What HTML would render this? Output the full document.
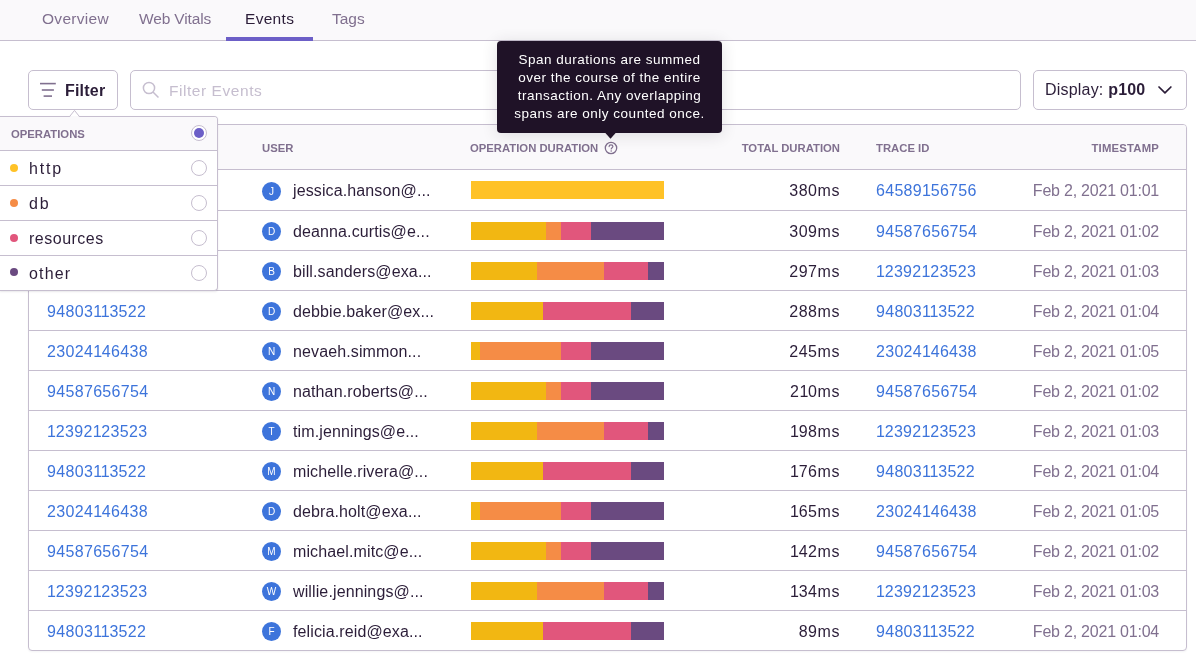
<!DOCTYPE html>
<html><head><meta charset="utf-8">
<style>
*{box-sizing:border-box;margin:0;padding:0}
html,body{will-change:transform;width:1196px;height:659px;overflow:hidden;background:#fff;font-family:"Liberation Sans",sans-serif;color:#2B1D38}
#tabs{position:absolute;left:0;top:0;width:1196px;height:41px;background:#FAF9FB;border-bottom:1px solid #C6BECF}
.tab{position:absolute;top:10px;font-size:15.5px;line-height:18px;color:#80708F;white-space:nowrap;letter-spacing:0.3px}
.tab.active{color:#2B1D38}
#uline{position:absolute;left:226px;top:37px;width:87px;height:4px;background:#6C5FC7}
.box{position:absolute;border:1px solid #C6BECF;border-radius:5px;background:#fff}
#panel{position:absolute;left:28px;top:124px;width:1159px;height:527px;border:1px solid #C6BECF;border-radius:4px;background:#fff;overflow:hidden;box-shadow:0 1px 2px rgba(43,34,51,.05)}
#thead{position:absolute;left:0;top:0;width:100%;height:45px;background:#FAF9FB;border-bottom:1px solid #C6BECF}
.th{position:absolute;top:16px;font-size:11.3px;line-height:14px;font-weight:bold;color:#80708F;white-space:nowrap}
.row{position:absolute;left:0;width:100%;border-bottom:1px solid #C6BECF}
.cell{position:absolute;top:11.5px;font-size:16px;line-height:18px;white-space:nowrap}
.link{color:#3D74DB}
.eid{left:18px;letter-spacing:0.33px}
.user{left:264px;letter-spacing:0.12px}
.dur{left:0;width:811px;text-align:right;letter-spacing:0.55px}
.dur i{font-style:normal;letter-spacing:-0.2px}
.eid i,.trace i{font-style:normal;letter-spacing:-0.2px}
.trace{left:847px;letter-spacing:0.3px}
.ts{left:0;width:1130px;text-align:right;color:#80708F;letter-spacing:-0.22px}
.r1 .cell{top:12px}.r1 .av{top:12px}
.av{position:absolute;top:11px;left:233px;width:19px;height:19px;border-radius:50%;background:#3D74DB;color:#fff;font-size:10px;text-align:center;line-height:19px}
.bar{position:absolute;left:442px;top:11px;width:193px;height:18px}
.bar span{position:absolute;top:0;height:100%}
.y{background:#F2B712}.y2{background:#FFC227}.o{background:#F58C46}.r{background:#E1567C}.p{background:#6A4A80}
.ddi{position:absolute;left:0;width:100%;height:35px;border-bottom:1px solid #C6BECF}
.ddi s{position:absolute;left:10px;top:13px;width:8px;height:8px;border-radius:50%}
.ddi span{position:absolute;left:29px;top:8.5px;font-size:16px;line-height:18px;color:#2B1D38;letter-spacing:0.4px}
.rad{position:absolute;left:191px;top:9px;width:16px;height:16px;border-radius:50%;border:1px solid #C6BECF;background:#fff}
.rad i{position:absolute;left:2px;top:2px;width:10px;height:10px;border-radius:50%;background:#6C5FC7}
</style></head><body>
<div id="tabs">
  <div class="tab" style="left:42px">Overview</div>
  <div class="tab" style="left:139px;letter-spacing:-0.15px">Web Vitals</div>
  <div class="tab active" style="left:245px">Events</div>
  <div class="tab" style="left:332px;letter-spacing:0">Tags</div>
  <div id="uline"></div>
</div>

<div class="box" style="left:28px;top:70px;width:90px;height:40px"></div>
<svg style="position:absolute;left:38px;top:80px" width="20" height="20" viewBox="0 0 20 20"><g stroke="#80708F" stroke-width="1.6" fill="none"><line x1="2" y1="3.6" x2="17.8" y2="3.6"/><line x1="3.8" y1="10" x2="15.9" y2="10"/><line x1="5.6" y1="16.1" x2="14" y2="16.1"/></g></svg>
<div style="position:absolute;left:65px;top:81.5px;font-size:16px;line-height:18px;font-weight:bold;color:#2B1D38;letter-spacing:0.2px">Filter</div>
<div class="box" style="left:130px;top:70px;width:891px;height:40px"></div>
<svg style="position:absolute;left:140px;top:79px" width="22" height="22" viewBox="0 0 22 22"><g stroke="#C6BECF" stroke-width="1.5" fill="none"><circle cx="9" cy="9" r="5.6"/><line x1="13" y1="13" x2="18.5" y2="18.5"/></g></svg>
<div style="position:absolute;left:169px;top:82px;font-size:15.5px;line-height:18px;color:#C6BECF;letter-spacing:0.55px">Filter Events</div>
<div class="box" style="left:1033px;top:70px;width:154px;height:40px"></div>
<div style="position:absolute;left:1045px;top:81px;font-size:16px;line-height:18px;color:#2B1D38;letter-spacing:0.2px">Display: <b>p100</b></div>
<svg style="position:absolute;left:1155px;top:82px" width="20" height="16" viewBox="0 0 20 16"><polyline points="4,5 9.95,10.9 15.9,5" stroke="#2B1D38" stroke-width="1.7" fill="none" stroke-linecap="round" stroke-linejoin="round"/></svg>

<div id="panel">
  <div id="thead">
    <div class="th" style="left:233px">USER</div>
    <div class="th" style="left:441px">OPERATION DURATION</div>
    <svg style="position:absolute;left:575px;top:16px" width="14" height="14" viewBox="0 0 14 14"><circle cx="7" cy="7" r="5.7" stroke="#80708F" stroke-width="1.3" fill="none"/><path d="M5.1,5.6 C5.1,4.4 5.9,3.9 7,3.9 C8.1,3.9 8.9,4.5 8.9,5.5 C8.9,6.6 7.2,6.8 7.2,8" stroke="#80708F" stroke-width="1.2" fill="none" stroke-linecap="round"/><circle cx="7.2" cy="9.9" r="0.75" fill="#80708F"/></svg>
    <div class="th" style="left:0;width:811px;text-align:right">TOTAL DURATION</div>
    <div class="th" style="left:847px">TRACE ID</div>
    <div class="th" style="left:0;width:1130px;text-align:right;letter-spacing:0.2px">TIMESTAMP</div>
  </div>
<div class="row r1" style="top:45.00px;height:41px"><div class="cell link eid">64589<i>1</i>56756</div><div class="av">J</div><div class="cell user">jessica.hanson@...</div><div class="bar"><span class="y2" style="left:0.0px;width:193.0px"></span></div><div class="cell dur">380ms</div><div class="cell link trace">64589<i>1</i>56756</div><div class="cell ts">Feb 2, 2021 01:01</div></div>
<div class="row" style="top:86.00px;height:40px"><div class="cell link eid">94587656754</div><div class="av">D</div><div class="cell user">deanna.curtis@e...</div><div class="bar"><span class="y" style="left:0.0px;width:75.0px"></span><span class="o" style="left:75.0px;width:15.0px"></span><span class="r" style="left:90.0px;width:30.0px"></span><span class="p" style="left:120.0px;width:73.0px"></span></div><div class="cell dur">309ms</div><div class="cell link trace">94587656754</div><div class="cell ts">Feb 2, 2021 01:02</div></div>
<div class="row" style="top:126.00px;height:40px"><div class="cell link eid"><i>1</i>2392<i>1</i>23523</div><div class="av">B</div><div class="cell user">bill.sanders@exa...</div><div class="bar"><span class="y" style="left:0.0px;width:65.5px"></span><span class="o" style="left:65.5px;width:67.5px"></span><span class="r" style="left:133.0px;width:44.0px"></span><span class="p" style="left:177.0px;width:16.0px"></span></div><div class="cell dur">297ms</div><div class="cell link trace"><i>1</i>2392<i>1</i>23523</div><div class="cell ts">Feb 2, 2021 01:03</div></div>
<div class="row" style="top:166.00px;height:40px"><div class="cell link eid">94803<i>1</i><i>1</i>3522</div><div class="av">D</div><div class="cell user">debbie.baker@ex...</div><div class="bar"><span class="y" style="left:0.0px;width:72.0px"></span><span class="r" style="left:72.0px;width:88.0px"></span><span class="p" style="left:160.0px;width:33.0px"></span></div><div class="cell dur">288ms</div><div class="cell link trace">94803<i>1</i><i>1</i>3522</div><div class="cell ts">Feb 2, 2021 01:04</div></div>
<div class="row" style="top:206.00px;height:40px"><div class="cell link eid">23024<i>1</i>46438</div><div class="av">N</div><div class="cell user">nevaeh.simmon...</div><div class="bar"><span class="y" style="left:0.0px;width:9.0px"></span><span class="o" style="left:9.0px;width:81.0px"></span><span class="r" style="left:90.0px;width:30.0px"></span><span class="p" style="left:120.0px;width:73.0px"></span></div><div class="cell dur">245ms</div><div class="cell link trace">23024<i>1</i>46438</div><div class="cell ts">Feb 2, 2021 01:05</div></div>
<div class="row" style="top:246.00px;height:40px"><div class="cell link eid">94587656754</div><div class="av">N</div><div class="cell user">nathan.roberts@...</div><div class="bar"><span class="y" style="left:0.0px;width:75.0px"></span><span class="o" style="left:75.0px;width:15.0px"></span><span class="r" style="left:90.0px;width:30.0px"></span><span class="p" style="left:120.0px;width:73.0px"></span></div><div class="cell dur">2<i>1</i>0ms</div><div class="cell link trace">94587656754</div><div class="cell ts">Feb 2, 2021 01:02</div></div>
<div class="row" style="top:286.00px;height:40px"><div class="cell link eid"><i>1</i>2392<i>1</i>23523</div><div class="av">T</div><div class="cell user">tim.jennings@e...</div><div class="bar"><span class="y" style="left:0.0px;width:65.5px"></span><span class="o" style="left:65.5px;width:67.5px"></span><span class="r" style="left:133.0px;width:44.0px"></span><span class="p" style="left:177.0px;width:16.0px"></span></div><div class="cell dur"><i>1</i>98ms</div><div class="cell link trace"><i>1</i>2392<i>1</i>23523</div><div class="cell ts">Feb 2, 2021 01:03</div></div>
<div class="row" style="top:326.00px;height:40px"><div class="cell link eid">94803<i>1</i><i>1</i>3522</div><div class="av">M</div><div class="cell user">michelle.rivera@...</div><div class="bar"><span class="y" style="left:0.0px;width:72.0px"></span><span class="r" style="left:72.0px;width:88.0px"></span><span class="p" style="left:160.0px;width:33.0px"></span></div><div class="cell dur"><i>1</i>76ms</div><div class="cell link trace">94803<i>1</i><i>1</i>3522</div><div class="cell ts">Feb 2, 2021 01:04</div></div>
<div class="row" style="top:366.00px;height:40px"><div class="cell link eid">23024<i>1</i>46438</div><div class="av">D</div><div class="cell user">debra.holt@exa...</div><div class="bar"><span class="y" style="left:0.0px;width:9.0px"></span><span class="o" style="left:9.0px;width:81.0px"></span><span class="r" style="left:90.0px;width:30.0px"></span><span class="p" style="left:120.0px;width:73.0px"></span></div><div class="cell dur"><i>1</i>65ms</div><div class="cell link trace">23024<i>1</i>46438</div><div class="cell ts">Feb 2, 2021 01:05</div></div>
<div class="row" style="top:406.00px;height:40px"><div class="cell link eid">94587656754</div><div class="av">M</div><div class="cell user">michael.mitc@e...</div><div class="bar"><span class="y" style="left:0.0px;width:75.0px"></span><span class="o" style="left:75.0px;width:15.0px"></span><span class="r" style="left:90.0px;width:30.0px"></span><span class="p" style="left:120.0px;width:73.0px"></span></div><div class="cell dur"><i>1</i>42ms</div><div class="cell link trace">94587656754</div><div class="cell ts">Feb 2, 2021 01:02</div></div>
<div class="row" style="top:446.00px;height:40px"><div class="cell link eid"><i>1</i>2392<i>1</i>23523</div><div class="av">W</div><div class="cell user">willie.jennings@...</div><div class="bar"><span class="y" style="left:0.0px;width:65.5px"></span><span class="o" style="left:65.5px;width:67.5px"></span><span class="r" style="left:133.0px;width:44.0px"></span><span class="p" style="left:177.0px;width:16.0px"></span></div><div class="cell dur"><i>1</i>34ms</div><div class="cell link trace"><i>1</i>2392<i>1</i>23523</div><div class="cell ts">Feb 2, 2021 01:03</div></div>
<div class="row" style="top:486.00px;height:40px"><div class="cell link eid">94803<i>1</i><i>1</i>3522</div><div class="av">F</div><div class="cell user">felicia.reid@exa...</div><div class="bar"><span class="y" style="left:0.0px;width:72.0px"></span><span class="r" style="left:72.0px;width:88.0px"></span><span class="p" style="left:160.0px;width:33.0px"></span></div><div class="cell dur">89ms</div><div class="cell link trace">94803<i>1</i><i>1</i>3522</div><div class="cell ts">Feb 2, 2021 01:04</div></div>
</div>
<div id="dd" style="position:absolute;left:0;top:116px;width:218px;height:175px;background:#fff;border:1px solid #C6BECF;border-left:none;border-radius:0 4px 4px 0;box-shadow:0 1px 2px rgba(43,34,51,.1);overflow:hidden">
  <div style="position:absolute;left:0;top:0;width:100%;height:34px;background:#FAF9FB;border-bottom:1px solid #C6BECF"></div>
  <div style="position:absolute;left:11px;top:10px;font-size:11.3px;line-height:14px;font-weight:bold;color:#80708F">OPERATIONS</div>
  <div class="rad" style="top:7.5px"><i></i></div>
  <div class="ddi" style="top:34px"><s style="background:#FFC227"></s><span style="letter-spacing:1.8px">http</span><div class="rad"></div></div>
  <div class="ddi" style="top:69px"><s style="background:#F58C46"></s><span style="letter-spacing:1.8px">db</span><div class="rad"></div></div>
  <div class="ddi" style="top:104px"><s style="background:#E1567C"></s><span style="letter-spacing:0.5px">resources</span><div class="rad"></div></div>
  <div class="ddi" style="top:139px;border-bottom:none"><s style="background:#6A4A80;top:12px"></s><span style="letter-spacing:1.15px">other</span><div class="rad"></div></div>
</div>
<svg style="position:absolute;left:69px;top:109px" width="12" height="9" viewBox="0 0 12 9"><polygon points="0.6,7.5 5.5,1.4 10.4,7.5" fill="#fff" stroke="#C6BECF" stroke-width="1"/><rect x="1.2" y="7" width="8.6" height="2" fill="#FAF9FB"/></svg>
<div id="tip" style="position:absolute;left:497px;top:41px;width:225px;height:92px;background:#1F1227;border-radius:4px;color:#fff;font-size:13.5px;line-height:18px;text-align:center;padding-top:9.5px;letter-spacing:0.5px;box-shadow:0 2px 16px rgba(43,34,51,.14)">Span durations are summed<br>over the course of the entire<br>transaction. Any overlapping<br>spans are only counted once.</div>
<svg style="position:absolute;left:603px;top:132px" width="15" height="8" viewBox="0 0 15 8"><polygon points="1.5,0 13.5,0 7.5,6.8" fill="#1F1227"/></svg>
</body></html>
